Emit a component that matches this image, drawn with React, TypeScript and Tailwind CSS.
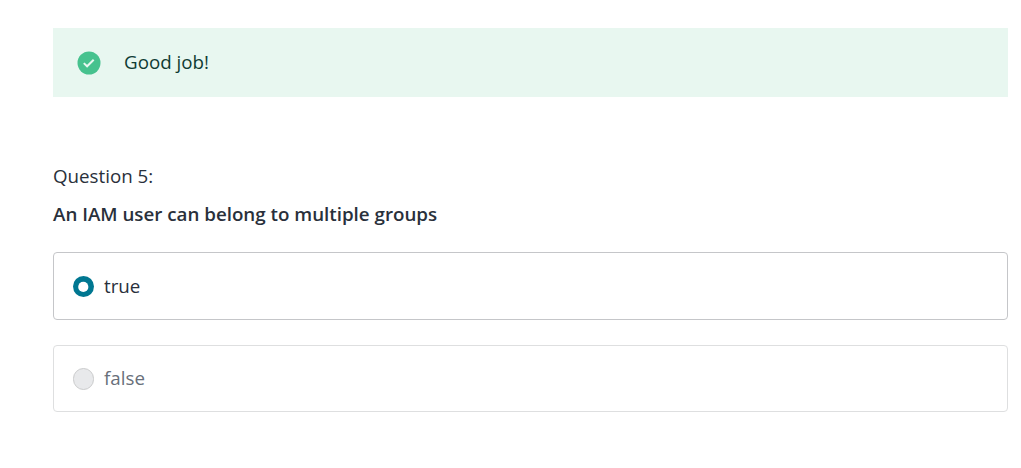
export default function App() {
  return (
    <main className="h-[468px] w-[1021px] bg-white pl-[53px] pr-[13px] pt-7 font-['Open_Sans',sans-serif] text-[18.75px] text-[#29303b]">
      <div className="flex h-[69px] items-center gap-[23px] bg-[#e8f7f0] pl-6">
        <svg className="h-6 w-6" viewBox="0 0 24 24" fill="none">
          <circle cx="12" cy="12" r="11.5" fill="#46c28e" />
          <path d="M6.8 12.1l3.3 3.2 6.6-6.6" stroke="#e8f7f0" strokeWidth="2" />
        </svg>
        <p className="pb-[2px] font-normal leading-[27px] text-[#0f3c34]">Good job!</p>
      </div>
      <p className="mt-[65px] font-normal leading-[27px]">Question 5:</p>
      <h1 className="mt-[11px] font-semibold leading-[27px]">An IAM user can belong to multiple groups</h1>
      <div className="mt-[25px] flex flex-col gap-[25px]">
        <label className="flex h-[68px] items-center gap-[10px] rounded border border-[#c5c6c9] pl-[19px]">
          <svg className="h-[21px] w-[21px]" viewBox="0 0 21 21">
            <circle cx="10.5" cy="10.5" r="10.5" fill="#007791" />
            <circle cx="10.3" cy="10.9" r="5.1" fill="#fff" />
          </svg>
          <span className="font-normal">true</span>
        </label>
        <label className="flex h-[67px] items-center gap-[10px] rounded border border-[#dedfe0] pl-[19px]">
          <span className="h-[22px] w-[21px] rounded-full border border-[#cacbcc] bg-[#e8e9eb]" />
          <span className="font-normal text-[#686f7a]">false</span>
        </label>
      </div>
    </main>
  );
}
